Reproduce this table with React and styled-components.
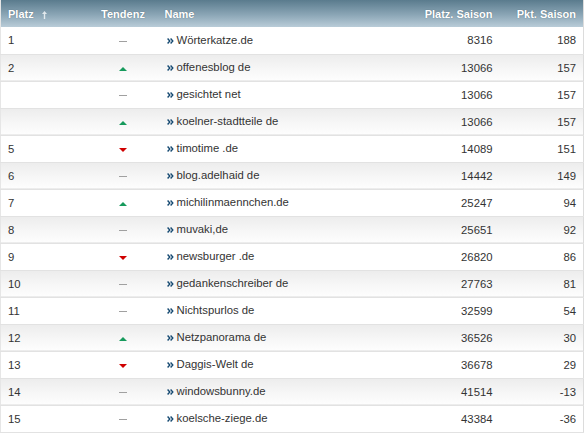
import React from "react";
import styled, { createGlobalStyle } from "styled-components";

const GlobalStyle = createGlobalStyle`
  body {
    margin: 0;
    padding: 0;
    background: #ffffff;
    font-family: "Liberation Sans", Arial, sans-serif;
  }
  * {
    box-sizing: border-box;
  }
`

const Table = styled.table`
  width: 583px;
  border-collapse: collapse;
  table-layout: fixed;
  border-left: 1px solid #e6e6e6;
  border-right: 1px solid #dcdcdc;
  border-bottom: 1px solid #dcdcdc;
  font-size: 11.3px;
  color: #333;
`

const HeadRow = styled.tr`
  height: 27px;
  background: linear-gradient(to bottom, #5a7b8d 0%, #8ba6b6 55%, #b9ccd8 100%);
`

const Th = styled.th`
  padding: 0 7px;
  text-align: ${(p) => p.$align || "left"};
  color: #ffffff;
  font-size: 11px;
  font-weight: bold;
  text-shadow: 0 0 1px rgba(40, 60, 75, 0.6);
  white-space: nowrap;
`

const SortMark = styled.svg`
  margin-left: 8px;
  vertical-align: -1px;
`

const Row = styled.tr`
  height: 27px;
  border-bottom: 1px solid #e2e2e2;
  background: ${(p) =>
    p.$shaded ? "linear-gradient(to bottom, #ececec 0%, #f7f7f7 60%, #fdfdfd 100%)" : "#ffffff"};
`

const Td = styled.td`
  padding: 0 7px;
  text-align: ${(p) => p.$align || "left"};
  white-space: nowrap;
`

const NameCell = styled.span`
  display: inline-flex;
  align-items: center;
  gap: 3px;
  margin-left: 2px;
`

const Dash = styled.span`
  display: inline-block;
  width: 8px;
  height: 1px;
  background: #a0a0a0;
  vertical-align: middle;
`

const Up = styled.span`
  display: inline-block;
  width: 0;
  height: 0;
  border-left: 4px solid transparent;
  border-right: 4px solid transparent;
  border-bottom: 4px solid #169a5c;
  vertical-align: middle;
`

const Down = styled.span`
  display: inline-block;
  width: 0;
  height: 0;
  border-left: 4px solid transparent;
  border-right: 4px solid transparent;
  border-top: 4px solid #d00000;
  vertical-align: middle;
`

const Chevrons = () => (
  <svg width="7" height="8" viewBox="0 0 7 8" style={{ marginTop: 2 }}>
    <path d="M0.6 1.5 L2.8 4 L0.6 6.5" fill="none" stroke="#164a72" strokeWidth="1.4" />
    <path d="M3.6 1.5 L5.8 4 L3.6 6.5" fill="none" stroke="#164a72" strokeWidth="1.4" />
  </svg>
)

const rows = [
  ["1", "-", "Wörterkatze.de", "8316", "188"],
  ["2", "up", "offenesblog de", "13066", "157"],
  ["", "-", "gesichtet net", "13066", "157"],
  ["", "up", "koelner-stadtteile de", "13066", "157"],
  ["5", "down", "timotime .de", "14089", "151"],
  ["6", "-", "blog.adelhaid de", "14442", "149"],
  ["7", "up", "michilinmaennchen.de", "25247", "94"],
  ["8", "-", "muvaki,de", "25651", "92"],
  ["9", "down", "newsburger .de", "26820", "86"],
  ["10", "-", "gedankenschreiber de", "27763", "81"],
  ["11", "-", "Nichtspurlos de", "32599", "54"],
  ["12", "up", "Netzpanorama de", "36526", "30"],
  ["13", "down", "Daggis-Welt de", "36678", "29"],
  ["14", "-", "windowsbunny.de", "41514", "-13"],
  ["15", "-", "koelsche-ziege.de", "43384", "-36"],
]

const Trend = ({ value }) => {
  if (value === "up") return <Up />
  if (value === "down") return <Down />
  return <Dash />
}

const App = () => (
  <>
    <GlobalStyle />
    <Table>
      <colgroup>
        <col style={{ width: 88 }} />
        <col style={{ width: 69 }} />
        <col style={{ width: 228 }} />
        <col style={{ width: 114 }} />
        <col style={{ width: 84 }} />
      </colgroup>
      <thead>
        <HeadRow>
          <Th $align="left">
            Platz
            <SortMark width="5" height="8" viewBox="0 0 5 8">
              <path d="M2.5 0 L5 3 L0 3 Z" fill="rgba(255,255,255,0.75)" />
              <rect x="1.8" y="3" width="1.4" height="5" fill="rgba(255,255,255,0.75)" />
            </SortMark>
          </Th>
          <Th $align="center">Tendenz</Th>
          <Th $align="left">Name</Th>
          <Th $align="right">Platz. Saison</Th>
          <Th $align="right">Pkt. Saison</Th>
        </HeadRow>
      </thead>
      <tbody>
        {rows.map((r, i) => (
          <Row key={i} $shaded={i % 2 === 1}>
            <Td>{r[0]}</Td>
            <Td $align="center">
              <Trend value={r[1]} />
            </Td>
            <Td>
              <NameCell>
                <Chevrons />
                {r[2]}
              </NameCell>
            </Td>
            <Td $align="right">{r[3]}</Td>
            <Td $align="right">{r[4]}</Td>
          </Row>
        ))}
      </tbody>
    </Table>
  </>
)

export default App;
